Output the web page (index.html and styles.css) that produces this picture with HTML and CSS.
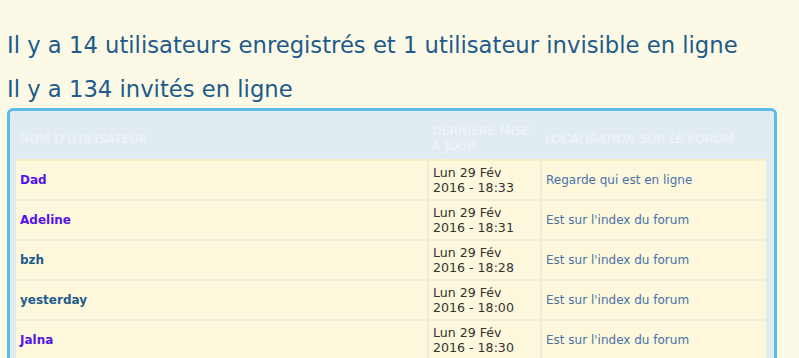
FILE: index.html
```html
<!DOCTYPE html>
<html lang="fr">
<head>
    <meta charset="UTF-8">
    <title>Qui est en ligne</title>
    <link rel="stylesheet" href="styles.css">
</head>
<body>

    <h3 class="online-title">Il y a 14 utilisateurs enregistrés et 1 utilisateur invisible en ligne</h3>
    <h3 class="online-title">Il y a 134 invités en ligne</h3>

    <div class="online-box">
        <table class="online-table">
            <thead>
                <tr>
                    <th class="col-name">Nom d'utilisateur</th>
                    <th class="col-date">Dernière mise à jour</th>
                    <th class="col-place">Localisation sur le forum</th>
                </tr>
            </thead>
            <tbody>
                <tr>
                    <td><a class="user user-admin" href="#">Dad</a></td>
                    <td class="date">Lun 29 Fév<br>2016 - 18:33</td>
                    <td><a class="place" href="#">Regarde qui est en ligne</a></td>
                </tr>
                <tr>
                    <td><a class="user user-admin" href="#">Adeline</a></td>
                    <td class="date">Lun 29 Fév<br>2016 - 18:31</td>
                    <td><a class="place" href="#">Est sur l'index du forum</a></td>
                </tr>
                <tr>
                    <td><a class="user" href="#">bzh</a></td>
                    <td class="date">Lun 29 Fév<br>2016 - 18:28</td>
                    <td><a class="place" href="#">Est sur l'index du forum</a></td>
                </tr>
                <tr>
                    <td><a class="user" href="#">yesterday</a></td>
                    <td class="date">Lun 29 Fév<br>2016 - 18:00</td>
                    <td><a class="place" href="#">Est sur l'index du forum</a></td>
                </tr>
                <tr>
                    <td><a class="user user-admin" href="#">Jalna</a></td>
                    <td class="date">Lun 29 Fév<br>2016 - 18:30</td>
                    <td><a class="place" href="#">Est sur l'index du forum</a></td>
                </tr>
            </tbody>
        </table>
    </div>

</body>
</html>
```

FILE: styles.css
```css
body {
    font-family: "DejaVu Sans", Verdana, sans-serif;
    background-color: #fcfae6;
    margin: 0;
    padding: 31px 22px 0 7px;
    color: #333333;
}

.online-title {
    font-size: 22.7px;
    font-weight: normal;
    color: #1e5b8c;
    margin: 0 0 16px 0;
    line-height: 28px;
    white-space: nowrap;
}

.online-box {
    border: 3px solid #5bbce4;
    border-radius: 6px;
    background-color: #e1ecf2;
    padding: 0 8px 0 6px;
    margin-top: -11px;
}

.online-table {
    width: 100%;
    border-collapse: collapse;
    font-size: 12px;
}

.online-table th {
    color: #f1f5f7;
    font-weight: normal;
    font-size: 12.5px;
    text-transform: uppercase;
    text-align: left;
    height: 42px;
    padding: 6px 4px 0 4px;
    vertical-align: middle;
    line-height: 15px;
}

.online-table th.col-place {
    font-style: italic;
}

.col-name {
    width: 404px;
}

.col-date {
    width: 105px;
}

.online-table td {
    background-color: #fdf8dc;
    border: 2px solid #e9eedb;
    border-top: 0;
    height: 38px;
    padding: 0 4px;
    line-height: 16px;
    vertical-align: middle;
}

.online-table td.date {
    font-size: 12.6px;
    line-height: 15px;
}

.online-table tbody tr:first-child td {
    border-top: 2px solid #f6efc6;
}

.online-table td:first-child {
    border-left: 0;
}

.online-table td:last-child {
    border-right: 0;
}

.user {
    font-weight: bold;
    color: #1e5b8c;
    text-decoration: none;
}

.user-admin {
    color: #5512ec;
}

.place {
    color: #4a72a8;
    text-decoration: none;
}
```
